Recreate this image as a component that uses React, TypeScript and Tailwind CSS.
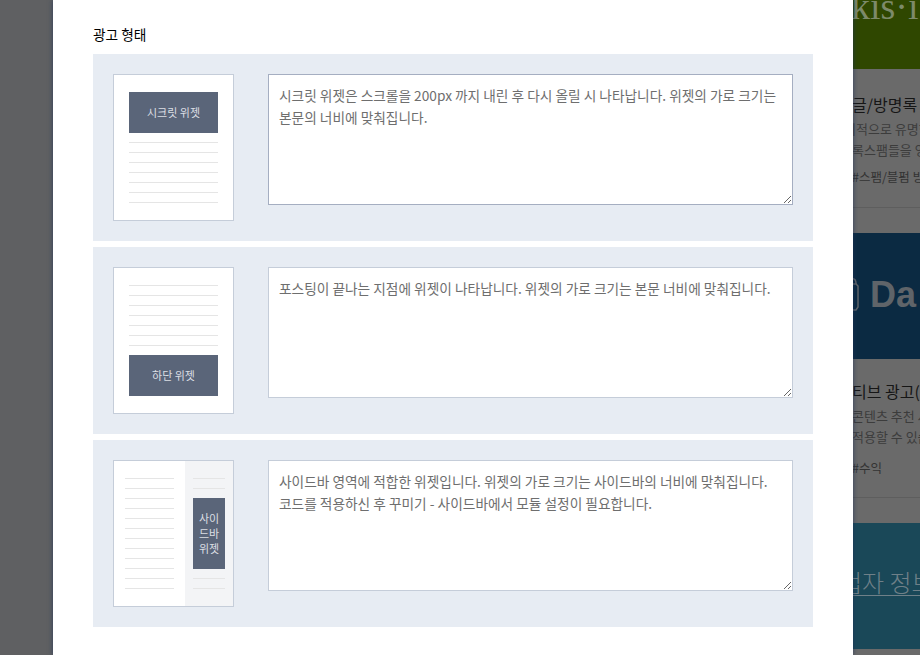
const font = '"Noto Sans CJK KR", "Liberation Sans", sans-serif';

function Lines({ count, className = "" }: { count: number; className?: string }) {
  return (
    <div className={"flex flex-col gap-[9px] " + className}>
      {Array.from({ length: count }).map((_, i) => (
        <div key={i} className="h-px bg-[#e5e5e5]" />
      ))}
    </div>
  );
}

function Widget({ children, className = "" }: { children: React.ReactNode; className?: string }) {
  return (
    <div className={"flex items-center justify-center bg-[#5a6579] text-[11px] text-[#dcdfe4] text-center " + className}>
      {children}
    </div>
  );
}

function AdRow({ thumb, text, active }: { thumb: React.ReactNode; text: string; active?: boolean }) {
  return (
    <div className="flex h-[187px] items-start bg-[#e7ecf3] pl-5 pr-5 pt-5">
      <div className="h-[147px] w-[121px] shrink-0 border border-[#c5cdd9] bg-white">{thumb}</div>
      <textarea
        readOnly
        defaultValue={text}
        className={
          "ml-[34px] h-[131px] w-[525px] border bg-white px-[10px] py-[9px] text-[13.7px] leading-[22px] text-[#6e6e6e] outline-none " +
          (active ? "border-[#a5aec1]" : "border-[#c5cdd9]")
        }
      />
    </div>
  );
}

function SideCard({ title, lines, tag, className, tagClass }: { title: string; lines: React.ReactNode[]; tag: string; className: string; tagClass: string }) {
  return (
    <div className={"h-[164px] overflow-hidden bg-[#6a6a6a] " + className}>
      <div className="-ml-px whitespace-nowrap">
        <div className="text-[16px] leading-[22px] text-[#161616]">{title}</div>
        <div className="mt-[3px] text-[13px] leading-[21px] text-[#3c3c3c]">
          {lines.map((l, i) => (
            <div key={i}>{l}</div>
          ))}
        </div>
        <div className={"text-[12.5px] leading-[18px] text-[#333] " + tagClass}>{tag}</div>
      </div>
      <div className="h-px bg-[#5e5e5e]" />
    </div>
  );
}

export default function App() {
  return (
    <div className="flex h-[655px] w-[920px] overflow-hidden bg-[#6a6a6a]" style={{ fontFamily: font }}>
      <div className="w-[53px] shrink-0 bg-[#5f6062]" />

      <div className="relative z-10 w-[800px] shrink-0 bg-white px-10 pt-[24px] shadow-[0_0_5px_rgba(30,50,90,0.75)]">
        <div className="mb-[10px] text-[13.7px] leading-5 text-black">광고 형태</div>
        <div className="flex flex-col gap-[6px]">
          <AdRow
            active
            text="시크릿 위젯은 스크롤을 200px 까지 내린 후 다시 올릴 시 나타납니다. 위젯의 가로 크기는 본문의 너비에 맞춰집니다."
            thumb={
              <div className="px-[15px] pt-[17px]">
                <Widget className="h-[41px]">시크릿 위젯</Widget>
                <Lines count={7} className="mt-[9px]" />
              </div>
            }
          />
          <AdRow
            text="포스팅이 끝나는 지점에 위젯이 나타납니다. 위젯의 가로 크기는 본문 너비에 맞춰집니다."
            thumb={
              <div className="px-[15px] pt-[17px]">
                <Lines count={7} />
                <Widget className="mt-[9px] h-[41px]">하단 위젯</Widget>
              </div>
            }
          />
          <AdRow
            text={"사이드바 영역에 적합한 위젯입니다. 위젯의 가로 크기는 사이드바의 너비에 맞춰집니다.\n코드를 적용하신 후 꾸미기 - 사이드바에서 모듈 설정이 필요합니다."}
            thumb={
              <div className="flex h-full">
                <div className="w-[71px] pl-[11px] pr-[11px] pt-[17px]">
                  <Lines count={12} />
                </div>
                <div className="flex-1 bg-[#f3f4f6] px-2 pt-[17px]">
                  <Lines count={2} />
                  <Widget className="my-[9px] h-[71px] leading-[15px]">
                    <span>
                      사이
                      <br />
                      드바
                      <br />
                      위젯
                    </span>
                  </Widget>
                  <Lines count={2} />
                </div>
              </div>
            }
          />
        </div>
      </div>

      <div className="w-[67px] shrink-0 overflow-hidden">
        <div className="h-[69px] overflow-hidden bg-[#2f4700]">
          <div className="-ml-[2px] -mt-[17px] whitespace-nowrap text-[38px] leading-[46px] text-[#7d8a6a]" style={{ fontFamily: '"Liberation Serif", serif' }}>
            kis·i
          </div>
        </div>
        <SideCard
          title="글/방명록 스"
          lines={[<span className="-ml-[8px] inline-block">이적으로 유명한</span>, "록스팸들을 영"]}
          tag="#스팸/블펌 방지"
          className="pt-[24px]"
          tagClass="mt-[8px] mb-[21px]"
        />
        <div className="flex h-[126px] items-center overflow-hidden bg-[#0b2a42] pb-[3px]">
          <svg width="12" height="36" viewBox="0 0 12 36" className="-ml-[6px] shrink-0" fill="none" stroke="#5f6469" strokeWidth="1.5">
            <path d="M0 7h9l2 2v21l-2 3H0" />
            <path d="M3 7c0-7 6-7 6 0" />
          </svg>
          <div className="ml-[11px] text-[36px] font-bold leading-none text-[#5f6469]" style={{ fontFamily: '"Liberation Sans", sans-serif' }}>
            Da
          </div>
        </div>
        <SideCard
          title="티브 광고(네"
          lines={["콘텐츠 추천 서", "적용할 수 있습"]}
          tag="#수익"
          className="pt-[21px]"
          tagClass="mt-[12px] mb-[20px]"
        />
        <div className="h-[126px] overflow-hidden bg-[#1a4858] pt-[46px]">
          <div className="border-b border-[#6f8088]">
            <div className="-ml-[13px] whitespace-nowrap text-[24px] font-light leading-[26px] text-[#6f8088]">업자 정보</div>
          </div>
        </div>
        <div className="h-[6px] bg-[#6a6a6a]" />
      </div>
    </div>
  );
}
